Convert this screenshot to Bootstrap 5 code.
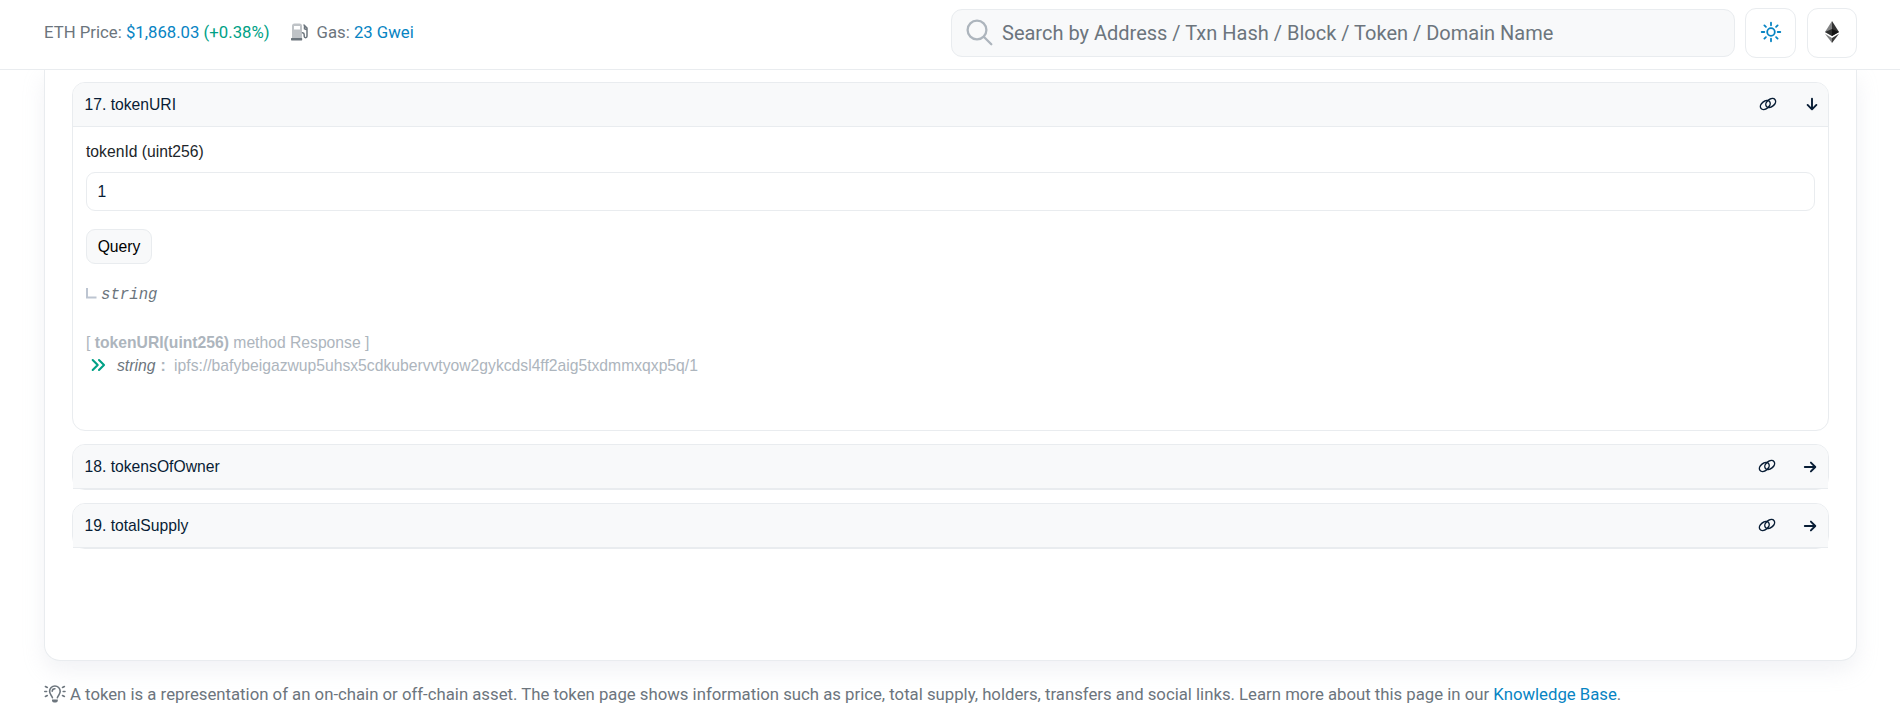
<!DOCTYPE html>
<html lang="en">
<head>
<meta charset="utf-8">
<meta name="viewport" content="width=device-width, initial-scale=1">
<title>Token contract</title>
<link href="https://cdn.jsdelivr.net/npm/bootstrap@5.3.0/dist/css/bootstrap.min.css" rel="stylesheet">
<style>
  :root { --line: #e9ecef; --soft: #f8f9fa; --dim: #adb5bd; --ink: #081d35; --blue: #0784c3; --green: #00a186; }
  body { font-family: Roboto, sans-serif; font-size: 16.74px; line-height: 24px; color: #6c757d; overflow: hidden; }
  a { color: var(--blue); text-decoration: none; }
  .gutter { padding-left: 44px; padding-right: 43px; }
  .topbar { height: 70px; border-bottom: 1px solid var(--line); padding-bottom: 4px; position: relative; z-index: 2; }
  .stat { padding-bottom: 2px; }
  .gain { color: var(--green); }
  .pump { margin-left: 21px; margin-bottom: 2px; }
  .searchbox { width: 784px; height: 48px; background: var(--soft); border: 1px solid var(--line); border-radius: 11px; font-size: 20px; padding-left: 14px; }
  .searchbox input { color: #6c757d; }
  .searchbox input::placeholder { color: #6c757d; opacity: 1; }
  .square { width: 50px; height: 50px; border: 1px solid var(--line); border-radius: 11px; background: #fff; padding: 0 0 1px; }
  .square.theme { width: 51px; }
  .panel { height: 591px; border: 1px solid var(--line); border-top: 0; border-radius: 0 0 16px 16px; box-shadow: 0 9px 21px rgba(189,197,209,.22); padding: 12px 27px 0; background: #fff; }
  .fn { font-family: "Liberation Sans", Arial, sans-serif; font-size: 15.7px; color: #212529; border: 1px solid var(--line); border-radius: 13px; margin-bottom: 13px; }
  .fn-head { height: 44px; background: var(--soft); border-bottom: 1px solid var(--line); border-radius: 12px 12px 0 0; padding: 0 11px 0 11.5px; color: var(--ink); }
  .fn-body { height: 303px; padding: 13px 13px 0; }
  .shut { height: 46px; }
  .fn .form-control { height: 39px; font: inherit; color: var(--ink); border-color: var(--line); border-radius: 9px; padding: 0 10.5px; }
  .query { height: 35px; width: 66px; font: inherit; border: 1px solid var(--line); background: var(--soft); border-radius: 9px; padding: 0; color: #000; }
  .kind { font: italic 15.7px/24px "Liberation Mono", monospace; color: #6c757d; }
  .reply { color: var(--dim); line-height: 23px; }
  .reply i { color: #6c757d; }
  svg { display: block; flex: none; }
  .link-mark { margin-bottom: 1px; }
</style>
</head>
<body>
<svg class="d-none">
  <symbol id="chain" viewBox="0 0 18 14"><g fill="none" stroke="currentColor" stroke-width="1.5" stroke-linecap="round"><ellipse cx="6.300" cy="8" rx="5.500" ry="3.700" transform="rotate(-38 6.300 8)"/><ellipse cx="11.700" cy="6" rx="5.500" ry="3.700" transform="rotate(-38 11.700 6)"/></g></symbol>
  <symbol id="right" viewBox="0 0 14 14"><path d="M1.8 7H12M7.9 2.6 12.3 7l-4.4 4.4" fill="none" stroke="currentColor" stroke-width="1.9" stroke-linecap="round" stroke-linejoin="round"/></symbol>
</svg>

<header class="topbar gutter bg-white d-flex align-items-center">
  <div class="stat">ETH Price: <a href="#">$1,868.03 <span class="gain">(+0.38%)</span></a></div>
  <svg class="pump" width="18" height="18" viewBox="0 0 18 18"><path fill="#bfc3c7" fill-rule="evenodd" d="M1 3a2.500 2.500 0 0 1 2.500-2.500h5A2.500 2.500 0 0 1 11 3v12H1zM3 3v3.500h6V3z"/><path fill="#6c757d" d="M.6 15h10a.7.7 0 0 1 .6.8v1a.7.7 0 0 1-.6.700H.6a.7.7 0 0 1-.6-.7v-1a.7.7 0 0 1 .6-.8z"/><path fill="none" stroke="#6c757d" stroke-width="1.500" stroke-linecap="round" d="M13 2 16 5v8.300a1.400 1.400 0 0 1-2.800 0v-1.600a2 2 0 0 0-1.700-2M13.500 3.500v2.300l2.400 1"/></svg>
  <div class="stat" style="margin-left:8px">Gas: <a href="#">23 Gwei</a></div>
  <div class="searchbox d-flex align-items-center ms-auto">
    <svg width="27" height="27" viewBox="0 0 27 27" fill="none" stroke="#adb5bd" stroke-width="2.3" stroke-linecap="round"><circle cx="11" cy="11" r="9.4"/><path d="m18 18 7.3 7.3"/></svg>
    <input class="border-0 bg-transparent flex-grow-1 p-0" style="margin-left:9px" placeholder="Search by Address / Txn Hash / Block / Token / Domain Name">
  </div>
  <button class="square theme d-flex align-items-center justify-content-center" style="margin-left:10px" aria-label="Theme">
    <svg width="22" height="22" viewBox="0 0 22 22" fill="none" stroke="#0784c3" stroke-width="1.8" stroke-linecap="round"><circle cx="11" cy="11" r="3.8"/><path d="M11 1.7v2.6M11 17.7v2.6M1.7 11h2.6M17.7 11h2.6M4.4 4.4l1.5 1.5M16.1 16.1l1.5 1.5M4.4 17.6l1.5-1.5M16.1 5.9l1.5-1.5"/></svg>
  </button>
  <button class="square d-flex align-items-center justify-content-center" style="margin-left:11px" aria-label="Network">
    <svg width="14" height="22" viewBox="0 0 14 22"><path fill="#828384" d="M7 0v15L0 11z"/><path fill="#343434" d="M7 0v15l7-4z"/><path fill="#2f3030" d="M7 8v7l-7-4z"/><path fill="#141414" d="M7 8v7l7-4z"/><path fill="#828384" d="M0 12.8 7 17v5z"/><path fill="#393939" d="M14 12.8 7 17v5z"/></svg>
  </button>
</header>

<main class="gutter">
  <section class="panel">
    <div class="fn">
      <div class="fn-head d-flex align-items-center"><span>17. tokenURI</span>
        <svg class="link-mark ms-auto" width="18" height="14"><use href="#chain"/></svg>
        <svg style="margin:0 -1.5px 2px 28px;transform:rotate(90deg)" width="14" height="14"><use href="#right"/></svg>
      </div>
      <div class="fn-body">
        <div>tokenId (uint256)</div>
        <input class="form-control" style="margin-top:8px" value="1">
        <button class="query btn d-block" style="margin-top:18px">Query</button>
        <div class="kind d-flex align-items-center" style="margin-top:19px">
          <svg width="11" height="12" viewBox="0 0 11 12" class="me-1 mb-1"><path d="M1 1v9.500h9.500" fill="none" stroke="#bdc5d1" stroke-width="2"/></svg>string
        </div>
        <div class="reply" style="margin-top:24px">
          <div>[ <b>tokenURI(uint256)</b> method Response ]</div>
          <div class="d-flex align-items-center">
            <svg style="margin:0 11.5px 1px 4.5px" width="15" height="14" viewBox="0 0 15 14" fill="none" stroke="#00a186" stroke-width="2.1" stroke-linecap="round" stroke-linejoin="round"><path d="m1.700 2 5 5-5 5M8 2l5 5-5 5"/></svg>
            <i>string</i><b style="margin:0 8.5px 0 5px">:</b><span>ipfs://bafybeigazwup5uhsx5cdkubervvtyow2gykcdsl4ff2aig5txdmmxqxp5q/1</span>
          </div>
        </div>
      </div>
    </div>
    <div class="fn shut">
      <div class="fn-head d-flex align-items-center"><span>18. tokensOfOwner</span>
        <svg class="link-mark ms-auto" width="18" height="14"><use href="#chain"/></svg>
        <svg style="margin-left:27px" width="14" height="14"><use href="#right"/></svg>
      </div>
    </div>
    <div class="fn shut">
      <div class="fn-head d-flex align-items-center"><span>19. totalSupply</span>
        <svg class="link-mark ms-auto" width="18" height="14"><use href="#chain"/></svg>
        <svg style="margin-left:27px" width="14" height="14"><use href="#right"/></svg>
      </div>
    </div>
  </section>
  <div class="d-flex align-items-center" style="margin-top:21px">
    <svg width="22" height="18" viewBox="0 0 22 18" fill="none" stroke="#6c757d" stroke-width="1.6" stroke-linecap="round"><path d="M8.4 12.6C8 10.600 5.600 9.500 5.600 6.300a5.300 5.300 0 0 1 10.600 0c0 3.200-2.400 4.300-2.800 6.300M8.200 6.300A2.700 2.700 0 0 1 10.900 3.700M.8 6.500h1.800M19.200 6.500h1.800M1.400 1.500l1.900 1M20.400 1.500l-1.900 1M1.400 11.500l1.900-1M20.400 11.500l-1.900-1"/><path fill="#6c757d" stroke="none" d="M8 14.400h5.800v1.200a2 2 0 0 1-2 2H10a2 2 0 0 1-2-2z"/></svg>
    <div class="text-nowrap" style="margin-left:4px">A token is a representation of an on-chain or off-chain asset. The token page shows information such as price, total supply, holders, transfers and social links. Learn more about this page in our <a href="#">Knowledge Base</a>.</div>
  </div>
</main>
<script src="https://cdn.jsdelivr.net/npm/bootstrap@5.3.0/dist/js/bootstrap.bundle.min.js"></script>
</body>
</html>
